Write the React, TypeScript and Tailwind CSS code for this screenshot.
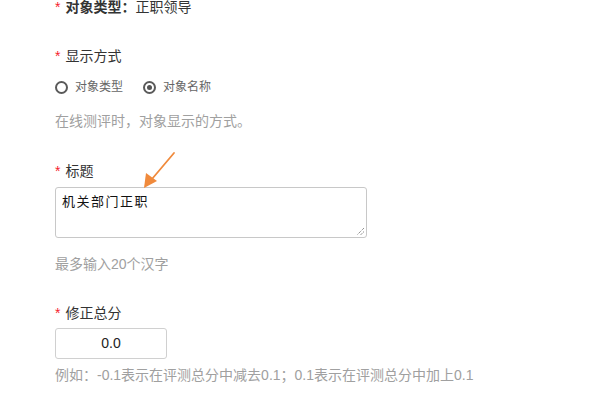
import React from "react";

const font = { fontFamily: '"Liberation Sans", "Noto Sans CJK SC", sans-serif' };

function Star() {
  return <span className="text-[#f5222d] mr-[5px]">*</span>;
}

export default function App() {
  return (
    <div className="relative w-[600px] h-[400px] overflow-hidden bg-white" style={font}>
      <div className="pl-[55px] flex flex-col items-start">
        <div className="-mt-[3px] h-5 leading-5 text-[14px] text-[#333]">
          <Star />
          <span className="font-bold">对象类型：</span>
          <span>正职领导</span>
        </div>

        <div className="mt-[29px] h-5 leading-5 text-[14px] text-[#333]">
          <Star />
          显示方式
        </div>

        <div className="mt-[11px] h-5 flex items-center text-[12px] text-[#666]">
          <div className="flex items-center">
            <span className="w-[13px] h-[13px] rounded-full border-2 border-[#5a5a5a] mr-[7px]" />
            <span>对象类型</span>
          </div>
          <div className="flex items-center ml-[20px]">
            <span className="w-[13px] h-[13px] rounded-full border-2 border-[#5a5a5a] mr-[7px] flex items-center justify-center">
              <span className="w-[5px] h-[5px] rounded-full bg-[#555]" />
            </span>
            <span>对象名称</span>
          </div>
        </div>

        <div className="mt-[14px] h-5 leading-5 text-[14px] text-[#a0a0a0]">
          在线测评时，对象显示的方式。
        </div>

        <div className="mt-[30px] h-5 leading-5 text-[14px] text-[#333]">
          <Star />
          标题
        </div>

        <div className="mt-[6px] w-[312px] h-[51px] border border-[#c8c8c8] rounded-[3px] relative">
          <div className="pl-[6px] pt-[4px] text-[13px] leading-5 tracking-[1.5px] text-[#111]">机关部门正职</div>
          <svg className="absolute right-[1px] bottom-[1px]" width="9" height="9" viewBox="0 0 9 9">
            <path d="M8 1 L1 8 M8 4.5 L4.5 8" stroke="#666" strokeWidth="1" strokeDasharray="1 1" />
          </svg>
        </div>

        <div className="mt-[16px] h-5 leading-5 text-[14px] text-[#a0a0a0]">最多输入20个汉字</div>

        <div className="mt-[29px] h-5 leading-5 text-[14px] text-[#333]">
          <Star />
          修正总分
        </div>

        <div className="mt-[5px] w-[112px] h-[31px] border border-[#d0d0d0] rounded-[3px] flex items-center justify-center text-[14px] text-[#222]">
          0.0
        </div>

        <div className="mt-[6px] h-5 leading-5 text-[14px] text-[#a0a0a0]">
          例如：-0.1表示在评测总分中减去0.1；0.1表示在评测总分中加上0.1
        </div>
      </div>

      <svg className="absolute left-0 top-0" width="600" height="400" viewBox="0 0 600 400">
        <line x1="174" y1="153" x2="152" y2="179" stroke="#f08a3c" strokeWidth="1.8" strokeLinecap="round" />
        <polygon points="144,188 146,173 157,181" fill="#f08a3c" />
      </svg>
    </div>
  );
}
